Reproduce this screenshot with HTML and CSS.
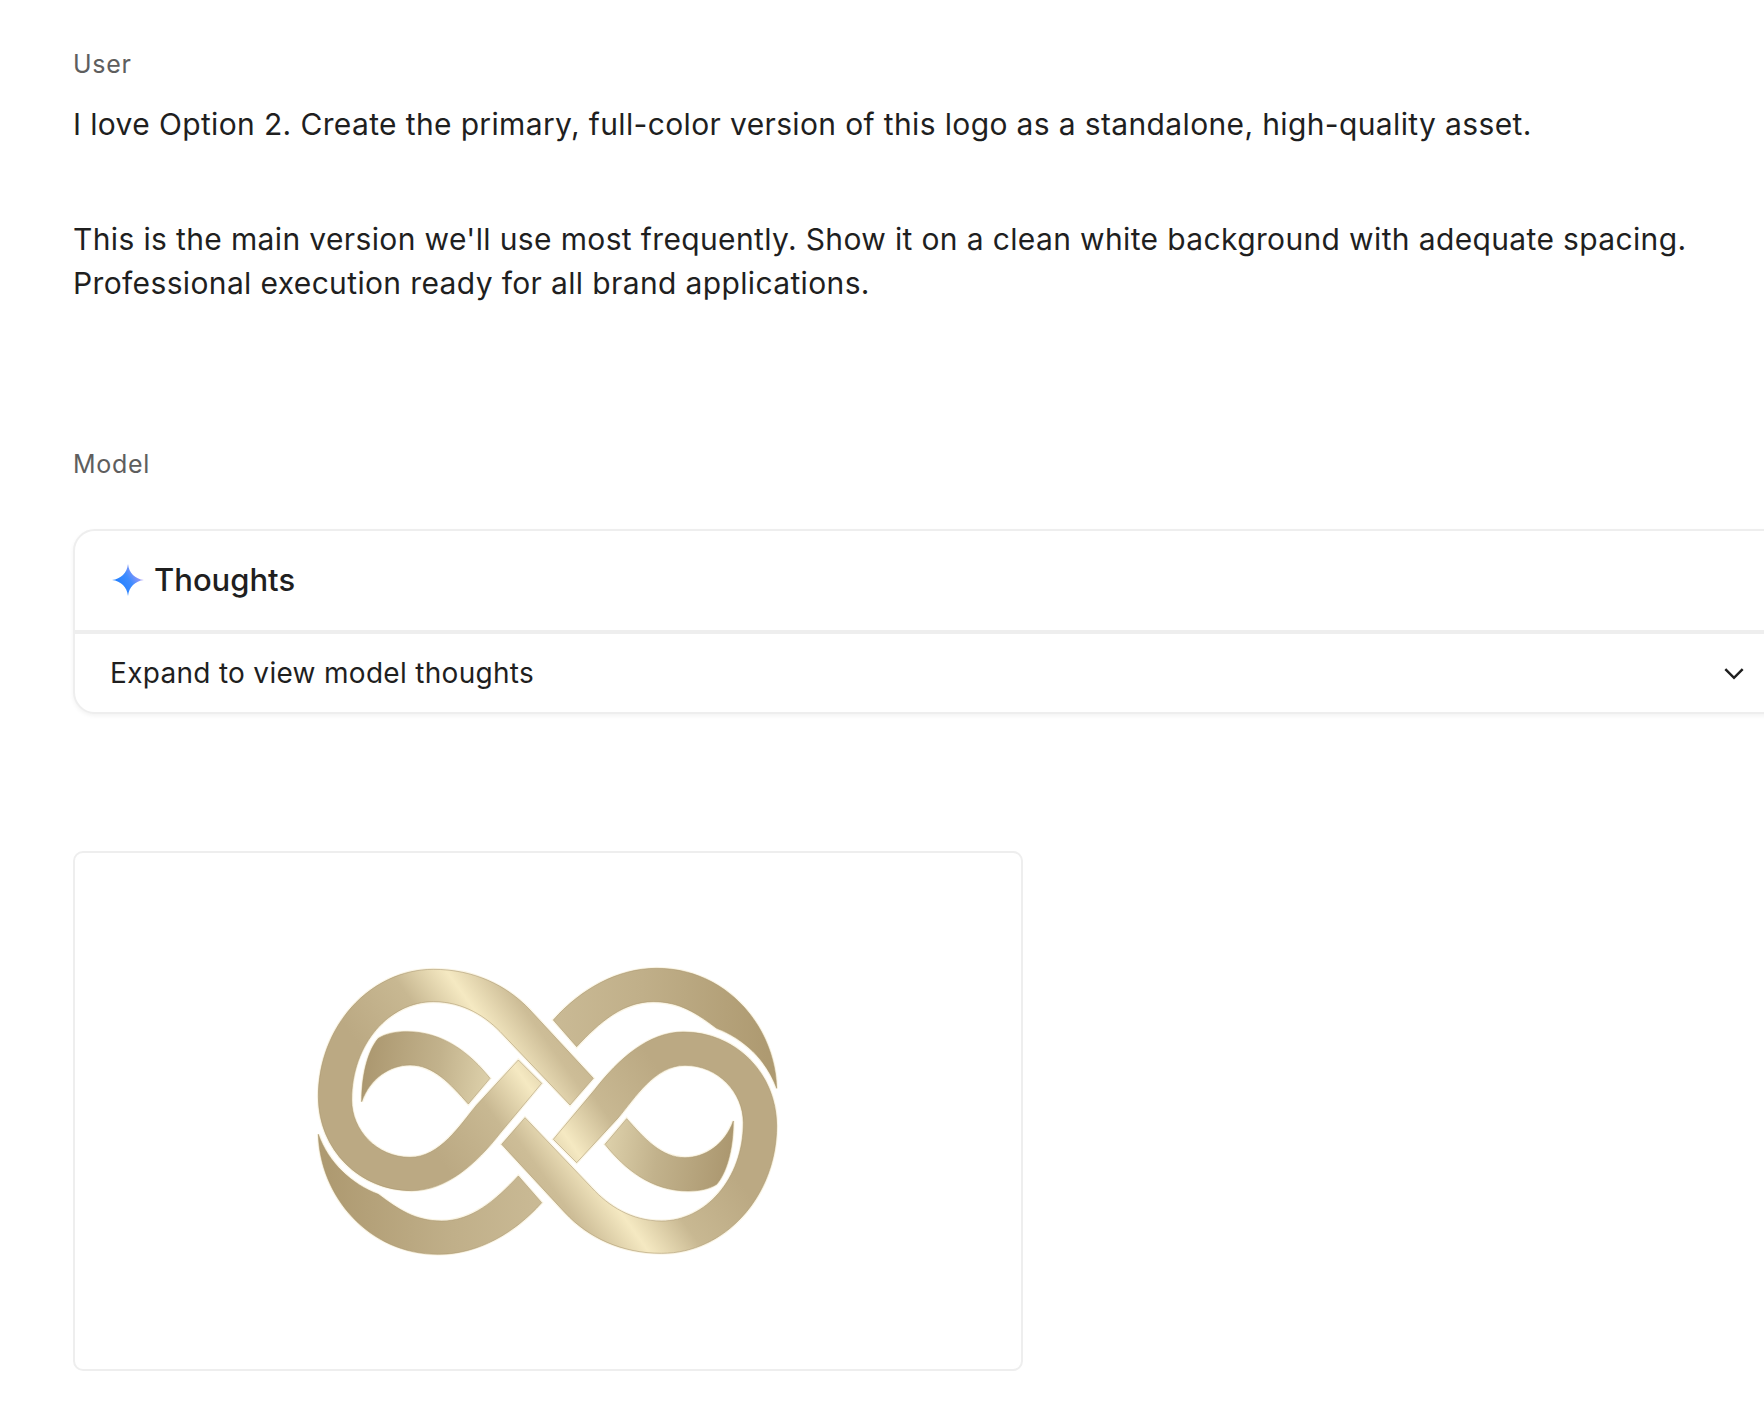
FILE: index.html
```html
<!DOCTYPE html>
<html lang="en">
<head>
<meta charset="utf-8">
<title>Conversation</title>
<link rel="stylesheet" href="styles.css">
</head>
<body>
<main class="page">
  <section class="turn turn-user">
    <div class="role">User</div>
    <p class="msg">I love Option 2. Create the primary, full-color version of this logo as a standalone, high-quality asset.</p>
    <p class="msg msg-second">This is the main version we'll use most frequently. Show it on a clean white background with adequate spacing. Professional execution ready for all brand applications.</p>
  </section>
  <section class="turn turn-model">
    <div class="role">Model</div>
    <div class="thoughts">
      <div class="thoughts-head">
        <svg class="spark" viewBox="0 0 32 32" aria-hidden="true">
          <defs>
            <linearGradient id="sparkFill" x1="4" y1="26" x2="30" y2="10" gradientUnits="userSpaceOnUse">
              <stop offset="0" stop-color="#1a7cff"/>
              <stop offset=".55" stop-color="#3f8cff"/>
              <stop offset="1" stop-color="#b79cf5"/>
            </linearGradient>
          </defs>
          <path fill="url(#sparkFill)" d="M16 0 C17 9 23 15 32 16 C23 17 17 23 16 32 C15 23 9 17 0 16 C9 15 15 9 16 0 Z"/>
        </svg>
        <span class="thoughts-title">Thoughts</span>
      </div>
      <div class="thoughts-row">
        <span>Expand to view model thoughts</span>
        <svg class="chevron" viewBox="0 0 20 12" aria-hidden="true"><path d="M2 2 L10 10 L18 2"/></svg>
      </div>
    </div>
    <figure class="asset">
      <svg class="logo" viewBox="0 0 1500 990" role="img" aria-label="Gold interlaced infinity logo">
        <defs>
          <linearGradient id="gMain" gradientUnits="userSpaceOnUse" x1="200" y1="320" x2="760" y2="-80">
            <stop offset="0" stop-color="#bba983"/>
            <stop offset=".3" stop-color="#c8b892"/>
            <stop offset=".5" stop-color="#f5e9c2"/>
            <stop offset=".68" stop-color="#cdbd97"/>
            <stop offset="1" stop-color="#bdab85"/>
          </linearGradient>
          <linearGradient id="gBig" gradientUnits="userSpaceOnUse" x1="780" y1="250" x2="1400" y2="250">
            <stop offset="0" stop-color="#c9b994"/>
            <stop offset=".4" stop-color="#c0af89"/>
            <stop offset="1" stop-color="#ae9a71"/>
          </linearGradient>
          <linearGradient id="gSmall" gradientUnits="userSpaceOnUse" x1="190" y1="350" x2="560" y2="400">
            <stop offset="0" stop-color="#ab976f"/>
            <stop offset=".6" stop-color="#c2b28c"/>
            <stop offset="1" stop-color="#dccfa9"/>
          </linearGradient>
          <g id="half">
            <path class="halo" d="M760 210 C840 120 950 55 1070 55 C1280 55 1425 230 1430 415 C1400 330 1330 265 1250 235 C1190 190 1140 155 1060 155 C970 155 900 215 830 290 Z"/>
            <path class="halo" d="M570 385 C510 310 430 245 320 245 C285 245 255 252 235 265 C205 300 185 370 185 455 C210 385 270 345 330 345 C400 345 450 400 505 462 Z"/>
            <path class="halo" d="M880 385 L690 180 C620 105 520 58 400 58 C210 58 55 230 55 440 C55 600 180 722 335 722 C440 722 530 640 600 550 L725 400 L655 330 L530 465 C480 525 420 622 330 622 C230 622 155 540 155 450 C155 280 270 155 400 155 C490 155 560 200 610 255 L810 465 Z"/>
            <path class="band" fill="url(#gBig)" d="M760 210 C840 120 950 55 1070 55 C1280 55 1425 230 1430 415 C1400 330 1330 265 1250 235 C1190 190 1140 155 1060 155 C970 155 900 215 830 290 Z"/>
            <path class="band" fill="url(#gSmall)" d="M570 385 C510 310 430 245 320 245 C285 245 255 252 235 265 C205 300 185 370 185 455 C210 385 270 345 330 345 C400 345 450 400 505 462 Z"/>
            <path class="band" fill="url(#gMain)" d="M880 385 L690 180 C620 105 520 58 400 58 C210 58 55 230 55 440 C55 600 180 722 335 722 C440 722 530 640 600 550 L725 400 L655 330 L530 465 C480 525 420 622 330 622 C230 622 155 540 155 450 C155 280 270 155 400 155 C490 155 560 200 610 255 L810 465 Z"/>
          </g>
        </defs>
        <use href="#half"/>
        <use href="#half" transform="rotate(180 742.5 484)"/>
      </svg>
    </figure>
  </section>
</main>
</body>
</html>
```
FILE: styles.css
```css
html, body {
  margin: 0;
  padding: 0;
  background: #fff;
  overflow: hidden;
  height: 1410px;
}
body {
  font-family: Inter, "Liberation Sans", sans-serif;
  color: #1f1f1f;
}
.page {
  padding: 48px 0 0 73px;
}
.role {
  font-size: 25px;
  line-height: 32px;
  letter-spacing: .7px;
  color: #5e5e5e;
}
.msg {
  margin: 22px 0 0;
  font-size: 30px;
  line-height: 44px;
  letter-spacing: .36px;
  width: 1640px;
}
.msg-second {
  margin-top: 71px;
}
.turn-model {
  margin-top: 143px;
}
.thoughts {
  box-sizing: border-box;
  margin-top: 49px;
  width: 1720px;
  height: 185px;
  border: 2px solid #eeeeee;
  border-radius: 22px;
  box-shadow: 0 2px 4px rgba(0, 0, 0, .05);
  background: #fff;
  display: flex;
  flex-direction: column;
}
.thoughts-head {
  box-sizing: content-box;
  height: 97px;
  flex: none;
  border-bottom: 4px solid #eeeeee;
  display: flex;
  align-items: center;
  padding: 0 0 2px 37px;
  gap: 10px;
}
.spark {
  width: 32px;
  height: 32px;
  flex: none;
}
.thoughts-title {
  font-size: 31px;
  font-weight: 500;
}
.thoughts-row {
  flex: 1;
  display: flex;
  align-items: center;
  justify-content: space-between;
  padding: 0 46px 0 35px;
  font-size: 28px;
  letter-spacing: .3px;
}
.chevron {
  width: 22px;
  height: 13px;
  flex: none;
  fill: none;
  stroke: #1f1f1f;
  stroke-width: 2.3;
}
.asset {
  box-sizing: border-box;
  margin: 137px 0 0;
  width: 950px;
  height: 520px;
  border: 2px solid #eeeeee;
  border-radius: 10px;
  background: #fff;
  display: flex;
  padding: 97px 0 0 225px;
}
.logo {
  width: 500px;
  height: 330px;
}
.halo {
  fill: none;
  stroke: #fbf6e6;
  stroke-width: 9;
}
.band {
  stroke: #a8946c;
  stroke-width: 3;
  stroke-opacity: .55;
}
```
